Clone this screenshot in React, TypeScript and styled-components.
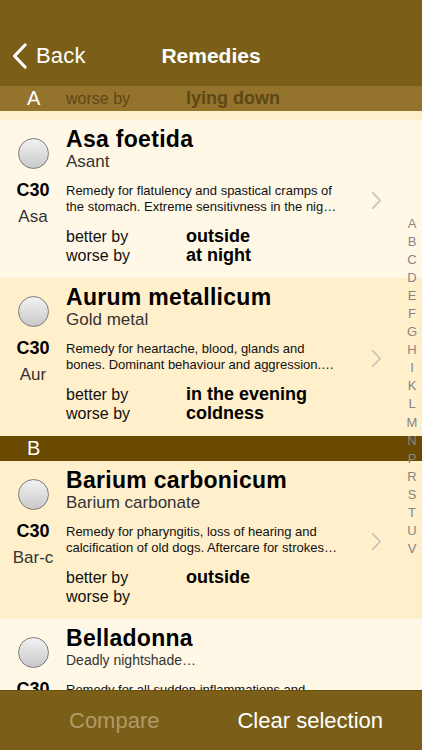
import styled, { createGlobalStyle } from 'styled-components';

type Remedy = {
  name: string
  latin: string
  small?: boolean
  potency: string
  abbr?: string
  lines: string[]
  better?: string
  worse?: string
  tone: 'light' | 'dark'
}

const sectionA: Remedy[] = [
  {
    name: "Asa foetida",
    latin: "Asant",
    potency: "C30",
    abbr: "Asa",
    lines: ["Remedy for flatulency and spastical cramps of", "the stomach. Extreme sensitivness in the nig…"],
    better: "outside",
    worse: "at night",
    tone: 'light',
  },
  {
    name: "Aurum metallicum",
    latin: "Gold metal",
    potency: "C30",
    abbr: "Aur",
    lines: ["Remedy for heartache, blood, glands and", "bones. Dominant behaviour and aggression.…"],
    better: "in the evening",
    worse: "coldness",
    tone: 'dark',
  },
]

const sectionB: Remedy[] = [
  {
    name: "Barium carbonicum",
    latin: "Barium carbonate",
    potency: "C30",
    abbr: "Bar-c",
    lines: ["Remedy for pharyngitis, loss of hearing and", "calcification of old dogs. Aftercare for strokes…"],
    better: "outside",
    worse: "",
    tone: 'dark',
  },
  {
    // only the top of this row is on screen, the rest sits under the toolbar
    name: "Belladonna",
    latin: "Deadly nightshade…",
    small: true,
    potency: "C30",
    lines: ["Remedy for all sudden inflammations and"],
    tone: 'light',
  },
]

const indexLetters = "ABCDEFGHIKLMNPRSTUV".split("")

const GlobalStyle = createGlobalStyle`
  html, body {
    margin: 0;
    padding: 0;
    background: #fff8e6;
  }
  body {
    font-family: "Liberation Sans", Arial, sans-serif;
  }
`

const Screen = styled.div`
  width: 422px;
  height: 750px;
  display: flex;
  flex-direction: column;
  overflow: hidden;
  position: relative;
`

const NavBar = styled.div`
  height: 86px;
  flex-shrink: 0;
  box-sizing: border-box;
  padding-top: 25px;
  display: grid;
  grid-template-columns: 1fr auto 1fr;
  align-items: center;
  background: #7b5f18;
  color: #fff;
`

const BackButton = styled.div`
  display: flex;
  align-items: center;
  gap: 9px;
  padding-left: 12px;
  font-size: 22px;
  letter-spacing: 0.2px;
`

const NavTitle = styled.div`
  font-size: 21px;
  font-weight: bold;
`

const List = styled.div`
  flex: 1;
  overflow: hidden;
  position: relative;
  background: #fff8e6;
`

const SectionHeader = styled.div<{ $overlay?: boolean }>`
  height: 25px;
  display: flex;
  align-items: center;
  background: ${p => p.$overlay ? "#94742c" : "#6a4a00"};
  color: #fff;
`

const SectionLetter = styled.div`
  width: 66px;
  box-sizing: border-box;
  padding-left: 27px;
  font-size: 20px;
`

const GhostLabel = styled.div`
  width: 120px;
  font-size: 16px;
  color: #5e4716;
`

const GhostValue = styled.div`
  font-size: 18px;
  font-weight: bold;
  color: #5e4716;
`

const RowTail = styled.div`
  height: 9px;
  background: #ffefcb;
`

const Row = styled.div<{ $tone: 'light' | 'dark' }>`
  height: 158px;
  flex-shrink: 0;
  display: flex;
  box-sizing: border-box;
  padding-right: 36px;
  background: ${p => p.$tone === 'light' ? "#fff8e6" : "#ffefcb"};
  overflow: hidden;
`

const LeftCol = styled.div`
  width: 66px;
  flex-shrink: 0;
  display: flex;
  flex-direction: column;
  align-items: center;
  padding-top: 18px;
`

const Radio = styled.div`
  width: 31px;
  height: 31px;
  box-sizing: border-box;
  border-radius: 50%;
  border: 1.5px solid #7c7c7c;
  background: linear-gradient(180deg, #f2f2f2 0%, #d9d9d9 60%, #c9c9c9 100%);
`

const Potency = styled.div`
  margin-top: 11px;
  font-size: 18px;
  line-height: 20px;
  font-weight: bold;
  color: #000;
`

const Abbr = styled.div`
  margin-top: 7px;
  font-size: 17px;
  line-height: 20px;
  color: #333;
`

const Body = styled.div`
  flex: 1;
  min-width: 0;
  padding-top: 6px;
`

const Name = styled.div`
  font-size: 23px;
  line-height: 26px;
  font-weight: bold;
  letter-spacing: 0.3px;
  color: #000;
`

const Latin = styled.div<{ $small?: boolean }>`
  font-size: ${p => p.$small ? "14px" : "17px"};
  line-height: 19px;
  color: #333;
  white-space: nowrap;
`

const Desc = styled.div`
  margin-top: 12px;
  font-size: 13px;
  line-height: 16px;
  color: #111;
  white-space: nowrap;
`

const Modalities = styled.div`
  margin-top: 12px;
  display: grid;
  grid-template-columns: 120px 1fr;
  grid-auto-rows: 19px;
  align-items: center;
`

const ModLabel = styled.div`
  font-size: 16px;
  color: #111;
`

const ModValue = styled.div`
  font-size: 18px;
  font-weight: bold;
  color: #000;
`

const ChevronCell = styled.div`
  width: 20px;
  flex-shrink: 0;
  display: flex;
  justify-content: center;
  padding-top: 71px;
`

const IndexBar = styled.div`
  position: absolute;
  right: 0;
  top: 129px;
  width: 20px;
  display: flex;
  flex-direction: column;
  align-items: center;
`

const IndexLetter = styled.div`
  height: 18.05px;
  line-height: 18px;
  font-size: 13px;
  color: #868686;
`

const Toolbar = styled.div`
  height: 60px;
  flex-shrink: 0;
  box-sizing: border-box;
  border-top: 1px solid #6a5010;
  display: flex;
  align-items: center;
  justify-content: space-between;
  padding: 0 39px 0 69px;
  background: #7b5f18;
`

const ToolButton = styled.div<{ $disabled?: boolean }>`
  font-size: 22px;
  color: ${p => p.$disabled ? "#b09a68" : "#fff"};
`

const Chevron = ({ color, w, h, sw }: { color: string, w: number, h: number, sw: number }) => (
  <svg width={w} height={h} viewBox={`0 0 ${w} ${h}`}>
    <path d={`M${sw} ${sw} L${w - sw} ${h / 2} L${sw} ${h - sw}`} fill="none" stroke={color} strokeWidth={sw} strokeLinecap="round" strokeLinejoin="round" />
  </svg>
)

const BackChevron = () => (
  <svg width={15} height={26} viewBox="0 0 15 26">
    <path d="M13 2 L2.5 13 L13 24" fill="none" stroke="#fff" strokeWidth={3.2} strokeLinecap="round" strokeLinejoin="round" />
  </svg>
)

const RemedyRow = ({ r }: { r: Remedy }) => (
  <Row $tone={r.tone}>
    <LeftCol>
      <Radio />
      <Potency>{r.potency}</Potency>
      {r.abbr && <Abbr>{r.abbr}</Abbr>}
    </LeftCol>
    <Body>
      <Name>{r.name}</Name>
      <Latin $small={r.small}>{r.latin}</Latin>
      <Desc>
        {r.lines.map((l, i) => <div key={i}>{l}</div>)}
      </Desc>
      {r.better !== undefined && (
        <Modalities>
          <ModLabel>better by</ModLabel>
          <ModValue>{r.better}</ModValue>
          <ModLabel>worse by</ModLabel>
          <ModValue>{r.worse}</ModValue>
        </Modalities>
      )}
    </Body>
    <ChevronCell>
      {r.better !== undefined && <Chevron color="#c9c3b6" w={11} h={19} sw={1.8} />}
    </ChevronCell>
  </Row>
)

function App() {
  return (
    <Screen>
      <GlobalStyle />
      <NavBar>
        <BackButton>
          <BackChevron />
          <span>Back</span>
        </BackButton>
        <NavTitle>Remedies</NavTitle>
        <div />
      </NavBar>
      <List>
        <SectionHeader $overlay>
          <SectionLetter>A</SectionLetter>
          <GhostLabel>worse by</GhostLabel>
          <GhostValue>lying down</GhostValue>
        </SectionHeader>
        <RowTail />
        {sectionA.map((r, i) => <RemedyRow key={i} r={r} />)}
        <SectionHeader>
          <SectionLetter>B</SectionLetter>
        </SectionHeader>
        {sectionB.map((r, i) => <RemedyRow key={i} r={r} />)}
        <IndexBar>
          {indexLetters.map(l => <IndexLetter key={l}>{l}</IndexLetter>)}
        </IndexBar>
      </List>
      <Toolbar>
        <ToolButton $disabled>Compare</ToolButton>
        <ToolButton>Clear selection</ToolButton>
      </Toolbar>
    </Screen>
  )
}

export default App
